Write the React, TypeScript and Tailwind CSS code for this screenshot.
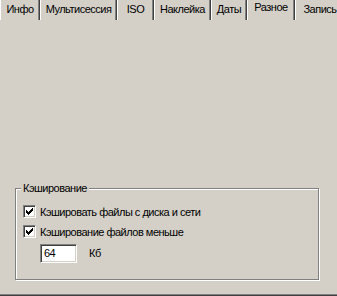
import React from 'react';

const tabs = [
  { label: 'Инфо', w: 'w-[40px]' },
  { label: 'Мультисессия', w: 'w-[77px]' },
  { label: 'ISO', w: 'w-[37px]' },
  { label: 'Наклейка', w: 'w-[57px]' },
  { label: 'Даты', w: 'w-[36px]' },
  { label: 'Разное', w: 'w-[48px]', active: true },
  { label: 'Запись', w: 'w-[50px]' },
];

const Check = () => (
  <div className="w-[13px] h-[13px] shrink-0 bg-white border-t border-l border-[#808080] border-r border-b border-r-white border-b-white shadow-[inset_1px_1px_0_#404040,inset_-1px_-1px_0_#d4d0c8] flex items-center justify-center">
    <svg width="7" height="7" viewBox="0 0 7 7" shapeRendering="crispEdges">
      <path
        fill="#000"
        d="M6 0h1v1h-1zM5 1h2v1h-2zM0 2h1v1h-1zM4 2h3v1h-3zM0 3h2v1h-2zM3 3h3v1h-3zM0 4h5v1h-5zM1 5h3v1h-3zM2 6h1v1h-1z"
      />
    </svg>
  </div>
);

export default function App() {
  return (
    <div
      className="w-[337px] h-[296px] bg-[#d4d0c8] overflow-hidden flex flex-col text-[11px] leading-[13px] tracking-[-0.5px] text-black"
      style={{ fontFamily: '"Liberation Sans", Arial, sans-serif' }}
    >
      {/* Tabs */}
      <div className="flex h-[20px] shrink-0">
        {tabs.map((t) =>
          t.active ? (
            <div
              key={t.label}
              className={`${t.w} shrink-0 border-l border-white border-r border-r-[#404040] shadow-[inset_-1px_0_#808080] text-center pt-[1px]`}
            >
              {t.label}
            </div>
          ) : (
            <div
              key={t.label}
              className={`${t.w} shrink-0 border-l border-white border-r border-r-[#404040] shadow-[inset_-1px_0_#808080] text-center pt-[3px]`}
            >
              {t.label}
            </div>
          )
        )}
      </div>

      {/* Panel */}
      <div className="flex-1 flex flex-col border-b border-[#404040] shadow-[inset_0_-1px_0_#808080]">
        <div className="relative mt-[168px] ml-[15px] w-[304px] h-[92px] border border-[#808080] shadow-[inset_1px_1px_0_#fff,1px_1px_0_#fff]">
          <div className="absolute left-[5px] top-[-7px] px-[2px] bg-[#d4d0c8]">Кэширование</div>
          <div className="flex flex-col pl-[7px] pt-[16px]">
            <div className="flex items-center gap-[4px] h-[13px]">
              <Check />
              <span className="pt-[1px]">Кэшировать файлы с диска и сети</span>
            </div>
            <div className="flex items-center gap-[4px] h-[13px] mt-[7px]">
              <Check />
              <span className="pt-[1px]">Кэширование файлов меньше</span>
            </div>
            <div className="flex items-center mt-[6px] ml-[17px]">
              <div className="w-[37px] h-[19px] bg-white border-t border-l border-[#808080] border-r border-b border-r-white border-b-white shadow-[inset_1px_1px_0_#404040,inset_-1px_-1px_0_#d4d0c8] pl-[3px] pt-[2px]">
                64
              </div>
              <span className="ml-[12px]">Кб</span>
            </div>
          </div>
        </div>
      </div>
    </div>
  );
}
